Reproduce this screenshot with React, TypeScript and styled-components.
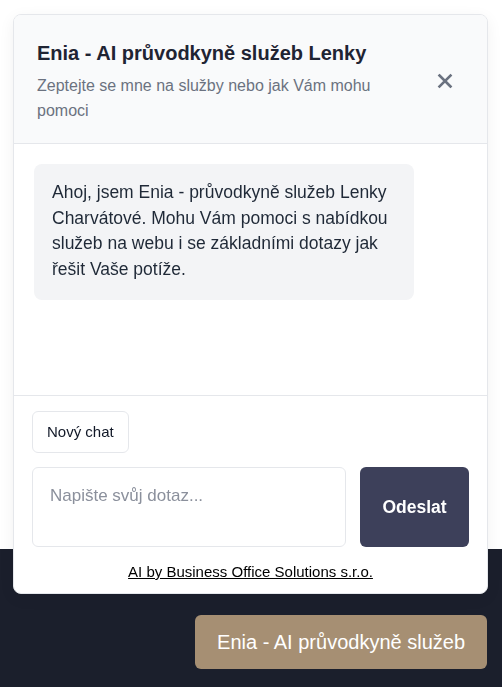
import styled, { createGlobalStyle } from 'styled-components'

const GlobalStyle = createGlobalStyle`
  html, body {
    margin: 0;
    padding: 0;
    background: #ffffff;
    font-family: "Liberation Sans", Arial, sans-serif;
  }
  * {
    box-sizing: border-box;
  }
`

const Page = styled.div`
  display: flex;
  flex-direction: column;
  min-height: 687px;
`

const Main = styled.main`
  height: 549px;
  background: #ffffff;
`

const Footer = styled.footer`
  flex: 1;
  background: #1b1f2c;
`

const ChatPanel = styled.section`
  position: fixed;
  right: 14px;
  bottom: 93px;
  width: 475px;
  height: 580px;
  display: flex;
  flex-direction: column;
  background: #ffffff;
  border: 1px solid #e5e7eb;
  border-radius: 8px;
  box-shadow: 0 4px 16px rgba(0, 0, 0, 0.06);
  overflow: hidden;
`

const Header = styled.header`
  display: flex;
  align-items: center;
  gap: 16px;
  padding: 24px 26px 20px 23px;
  background: #f9fafb;
  border-bottom: 1px solid #e5e7eb;
`

const HeaderText = styled.div`
  flex: 1;
`

const Title = styled.h2`
  margin: 0 0 6px;
  font-size: 20px;
  line-height: 28px;
  font-weight: 700;
  color: #1f2433;
`

const Subtitle = styled.p`
  margin: 0;
  font-size: 16px;
  line-height: 25px;
  color: #6b7280;
`

const CloseButton = styled.button`
  width: 32px;
  height: 32px;
  display: flex;
  align-items: center;
  justify-content: center;
  padding: 0;
  border: none;
  background: transparent;
  color: #6b7280;
  cursor: pointer;
`

const Messages = styled.div`
  flex: 1;
  padding: 20px;
  display: flex;
  flex-direction: column;
  align-items: flex-start;
`

const Bubble = styled.div`
  max-width: 380px;
  padding: 16px 18px 18px;
  background: #f3f4f6;
  border-radius: 8px;
  font-size: 17.5px;
  line-height: 25.6px;
  color: #1f2937;
`

const Composer = styled.div`
  display: flex;
  flex-direction: column;
  padding: 15px 18px 11px;
  border-top: 1px solid #e5e7eb;
`

const NewChatButton = styled.button`
  align-self: flex-start;
  padding: 10px 14px;
  font-family: inherit;
  font-size: 15px;
  line-height: 20px;
  color: #111827;
  background: #ffffff;
  border: 1px solid #e5e7eb;
  border-radius: 6px;
  cursor: pointer;
`

const InputRow = styled.div`
  display: flex;
  gap: 14px;
  margin-top: 14px;
`

const Input = styled.textarea`
  flex: 1;
  height: 80px;
  padding: 16px 17px;
  font-family: inherit;
  font-size: 17px;
  line-height: 24px;
  color: #111827;
  border: 1px solid #e5e7eb;
  border-radius: 6px;
  resize: none;
  outline: none;

  &::placeholder {
    color: #8b909c;
  }
`

const SendButton = styled.button`
  width: 109px;
  height: 80px;
  font-family: inherit;
  font-size: 17.5px;
  font-weight: 700;
  color: #ffffff;
  background: #3d405a;
  border: none;
  border-radius: 6px;
  cursor: pointer;
`

const Credit = styled.a`
  align-self: center;
  margin-top: 15px;
  font-size: 15px;
  line-height: 20px;
  color: #000000;
  text-decoration: underline;
`

const ToggleButton = styled.button`
  position: fixed;
  right: 15px;
  bottom: 18px;
  height: 54px;
  padding: 0 22px;
  font-family: inherit;
  font-size: 20px;
  color: #ffffff;
  background: #a68f73;
  border: none;
  border-radius: 6px;
  cursor: pointer;
`

const App = () => (
  <>
    <GlobalStyle />
    <Page>
      <Main />
      <Footer />
    </Page>

    <ChatPanel>
      <Header>
        <HeaderText>
          <Title>Enia - AI průvodkyně služeb Lenky</Title>
          <Subtitle>Zeptejte se mne na služby nebo jak Vám mohu pomoci</Subtitle>
        </HeaderText>
        <CloseButton aria-label="Zavřít">
          <svg width="16" height="16" viewBox="0 0 16 16" fill="none">
            <path d="M2.5 2.5 L13.5 13.5 M13.5 2.5 L2.5 13.5" stroke="currentColor" strokeWidth="2.6" strokeLinecap="square" />
          </svg>
        </CloseButton>
      </Header>

      <Messages>
        <Bubble>
          Ahoj, jsem Enia - průvodkyně služeb Lenky Charvátové. Mohu Vám pomoci s nabídkou služeb na webu i se
          základními dotazy jak řešit Vaše potíže.
        </Bubble>
      </Messages>

      <Composer>
        <NewChatButton>Nový chat</NewChatButton>
        <InputRow>
          <Input placeholder="Napište svůj dotaz..." />
          <SendButton>Odeslat</SendButton>
        </InputRow>
        <Credit href="#">AI by Business Office Solutions s.r.o.</Credit>
      </Composer>
    </ChatPanel>

    <ToggleButton>Enia - AI průvodkyně služeb</ToggleButton>
  </>
)

export default App
